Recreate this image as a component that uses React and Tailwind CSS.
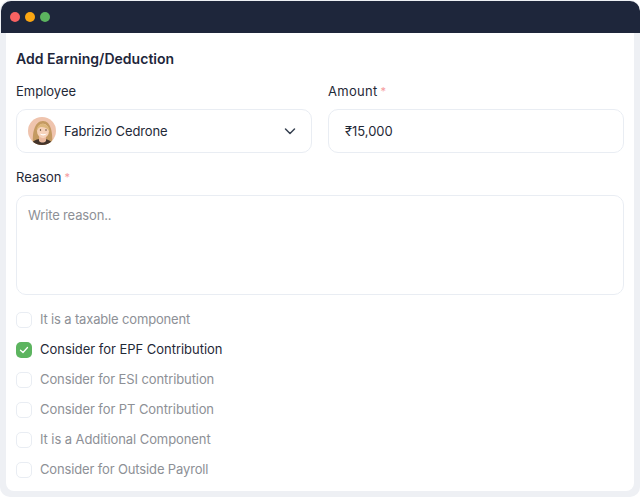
const options = [
  { label: "It is a taxable component", cls: "tracking-[-0.16px]" },
  { label: "Consider for EPF Contribution", checked: true, cls: "tracking-[-0.03px]" },
  { label: "Consider for ESI contribution", cls: "tracking-[-0.1px]" },
  { label: "Consider for PT Contribution", cls: "tracking-[-0.08px]" },
  { label: "It is a Additional Component", cls: "tracking-[-0.08px]" },
  { label: "Consider for Outside Payroll", cls: "tracking-[-0.14px]" },
];

function Avatar() {
  return (
    <svg width="28" height="28" viewBox="0 0 28 28" className="shrink-0 rounded-full">
      <rect width="28" height="28" fill="#efc4ae" />
      <path d="M5 28 C4 17 6 4 15 4 C23 4 25 16 24 28 Z" fill="#c49a62" />
      <path d="M2 28 C5 23 9 22 14 22 C19 22 23 23 26 28 Z" fill="#43342b" />
      <path d="M11 19 h7 v5 c-2 2 -5 2 -7 0 Z" fill="#eab99e" />
      <ellipse cx="15" cy="14" rx="6" ry="7.2" fill="#f6d2ba" />
      <path d="M8.5 14 C9 8 13 6 16 7 C19 8 22 11 21.5 15 C20 11 16 10 12.5 10 C10.5 11 9.5 12 8.5 14 Z" fill="#dcb67c" />
      <path d="M11.5 16.5 Q15 20.5 19 16.5 Q15 17.8 11.5 16.5 Z" fill="#fff" />
      <circle cx="12.5" cy="13" r="0.7" fill="#4a3425" />
      <circle cx="18" cy="13" r="0.7" fill="#4a3425" />
    </svg>
  );
}

function Required() {
  return <span className="ml-[3px] align-top text-[11px] leading-4 text-[#f59a9b]">*</span>;
}

export default function App() {
  return (
    <div
      className="flex h-[497px] w-[640px] flex-col overflow-hidden rounded-[10px] bg-[#eef0f4] text-[13px] text-[#1f2937]"
      style={{ fontFamily: "Inter, 'Noto Sans', sans-serif" }}
    >
      <div className="ml-px mt-px flex h-8 w-[639px] shrink-0 items-center gap-[5px] rounded-t-[10px] bg-[#1e263b] pl-[9px]">
        <span className="size-[10px] rounded-full bg-[#f86262]" />
        <span className="size-[10px] rounded-full bg-[#fba612]" />
        <span className="size-[10px] rounded-full bg-[#5cb45f]" />
      </div>
      <div className="mx-[6px] flex h-[458px] flex-col rounded-b-[8px] bg-white px-[10px] pt-[17px]">
        <h1 className="text-[14px] font-semibold leading-[18px] tracking-[0.03px] text-[#1e263b]">Add Earning/Deduction</h1>
        <div className="mt-[15px] flex gap-4">
          <div className="w-[296px]">
            <div className="leading-4">Employee</div>
            <div className="mt-[10px] flex h-[44px] items-center rounded-[10px] border border-[#e9edf3] pl-[11px] pr-[14px]">
              <Avatar />
              <span className="ml-2 pt-px tracking-[-0.12px]">Fabrizio Cedrone</span>
              <svg width="14" height="14" viewBox="0 0 14 14" fill="none" className="ml-auto" stroke="#374151" strokeWidth="1.5" strokeLinecap="round" strokeLinejoin="round">
                <path d="M2.5 5 L7 9.5 L11.5 5" />
              </svg>
            </div>
          </div>
          <div className="w-[296px]">
            <div className="leading-4"><span className="tracking-[0.3px]">Amount</span><Required /></div>
            <div className="mt-[10px] flex h-[44px] items-center rounded-[10px] border border-[#e9edf3] px-4 pt-px tracking-[-0.03px]">₹15,000</div>
          </div>
        </div>
        <div className="mt-4 leading-4">Reason<Required /></div>
        <div className="mt-[10px] h-[100px] rounded-[10px] border border-[#e9edf3] px-[11px] pt-[11px] leading-4 tracking-[-0.15px] text-[#8d9096]">
          Write reason..
        </div>
        <div className="mt-[17px] flex flex-col gap-[14px]">
          {options.map((o) => (
            <div key={o.label} className="flex h-4 items-center gap-2">
              {o.checked ? (
                <span className="flex size-4 items-center justify-center rounded-[5px] bg-[#5cb45f]">
                  <svg width="10" height="10" viewBox="0 0 10 10" fill="none" stroke="#fff" strokeWidth="1.3" strokeLinecap="round" strokeLinejoin="round">
                    <path d="M1.5 5.2 L4 7.5 L8.5 2.5" />
                  </svg>
                </span>
              ) : (
                <span className="size-4 rounded-[5px] border border-[#e9edf3]" />
              )}
              <span className={`${o.cls} ${o.checked ? "text-[#1f2937]" : "text-[#8d9096]"}`}>{o.label}</span>
            </div>
          ))}
        </div>
      </div>
    </div>
  );
}
